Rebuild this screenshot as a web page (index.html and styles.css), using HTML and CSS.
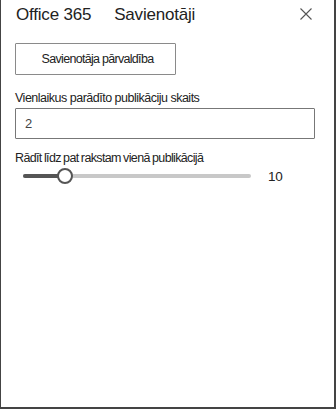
FILE: index.html
```html
<!DOCTYPE html>
<html lang="lv">
<head>
    <meta charset="UTF-8">
    <meta name="viewport" content="width=device-width, initial-scale=1.0">
    <title>Savienotāji</title>
    <link rel="stylesheet" href="styles.css">
</head>
<body>
    <div class="panel">
        <div class="panel-header">
            <h1 class="panel-title"><span class="brand">Office 365</span><span>Savienotāji</span></h1>
            <button class="close-btn" aria-label="Aizvērt">
                <svg width="12" height="12" viewBox="0 0 12 12">
                    <path d="M0.5 0.5 L11.5 11.5 M11.5 0.5 L0.5 11.5" stroke="#555" stroke-width="1.1" fill="none"/>
                </svg>
            </button>
        </div>

        <div class="panel-body">
            <button class="manage-btn">Savienotāja pārvaldība</button>

            <label class="field-label">Vienlaikus parādīto publikāciju skaits</label>
            <div class="text-input">2</div>

            <label class="field-label second">Rādīt līdz pat rakstam vienā publikācijā</label>
            <div class="slider-row">
                <div class="slider">
                    <div class="track"></div>
                    <div class="track-fill"></div>
                    <div class="thumb"></div>
                </div>
                <span class="slider-value">10</span>
            </div>
        </div>
    </div>
</body>
</html>
```

FILE: styles.css
```css
body {
    margin: 0;
    font-family: "Liberation Sans", Arial, sans-serif;
    color: #222;
    background: #fff;
}
.panel {
    width: 336px;
    height: 409px;
    box-sizing: border-box;
    border-left: 1px solid #444;
    border-right: 2px solid #444;
    border-bottom: 2px solid #444;
    background: #fff;
}
.panel-header {
    display: flex;
    justify-content: space-between;
    align-items: flex-start;
    padding: 5px 22px 0 15px;
    height: 25px;
}
.panel-title {
    margin: 0;
    font-size: 17px;
    font-weight: normal;
    letter-spacing: -0.2px;
    color: #222;
    display: flex;
    gap: 23px;
}
.close-btn {
    background: none;
    border: none;
    padding: 0;
    margin-top: 3px;
    width: 12px;
    height: 12px;
    display: flex;
    cursor: pointer;
}
.panel-body {
    padding: 13px 18px 0 14px;
    display: flex;
    flex-direction: column;
    align-items: flex-start;
}
.manage-btn {
    width: 161px;
    height: 32px;
    background: #fff;
    border: 1px solid #8a8a8a;
    border-radius: 1px;
    font-family: inherit;
    font-size: 12.5px;
    letter-spacing: -0.7px;
    color: #222;
    padding: 0 0 0 4px;
}
.field-label {
    margin-top: 16px;
    font-size: 12.5px;
    letter-spacing: -0.5px;
    color: #222;
}
.field-label.second {
    margin-top: 12px;
    letter-spacing: -0.65px;
    word-spacing: -0.5px;
}
.text-input {
    margin-top: 3px;
    width: 300px;
    height: 31px;
    box-sizing: border-box;
    border: 1px solid #777;
    border-radius: 1px;
    font-size: 13px;
    color: #444;
    padding: 0 9px;
    display: flex;
    align-items: center;
}
.slider-row {
    margin-top: 2px;
    display: flex;
    align-items: center;
    width: 300px;
}
.slider {
    position: relative;
    width: 228px;
    height: 18px;
    margin-left: 8px;
}
.track {
    position: absolute;
    left: 0;
    right: 0;
    top: 7px;
    height: 4px;
    border-radius: 2px;
    background: #c8c8c8;
}
.track-fill {
    position: absolute;
    left: 0;
    width: 40px;
    top: 7px;
    height: 4px;
    border-radius: 2px;
    background: #555;
}
.thumb {
    position: absolute;
    left: 34px;
    top: 1px;
    width: 12px;
    height: 12px;
    border: 2px solid #555;
    border-radius: 50%;
    background: #fff;
}
.slider-value {
    margin-left: 17px;
    font-size: 13.5px;
    letter-spacing: -0.3px;
    color: #222;
}
```
